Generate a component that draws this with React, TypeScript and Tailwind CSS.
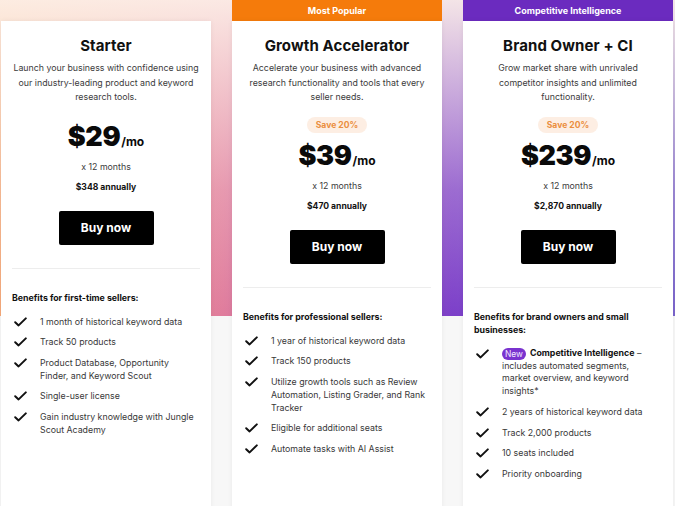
import React from "react";

type Plan = {
  header?: { text: string; bg: string };
  title: string;
  desc: string[];
  save?: boolean;
  price: string;
  annual: string;
  benefitsTitle: React.ReactNode;
  items: React.ReactNode[];
};

function Check() {
  return (
    <svg width="13" height="10" viewBox="0 0 13 10" fill="none">
      <path d="M1.2 5.2 L4.6 8.4 L11.8 1.4" stroke="#111" strokeWidth="2" strokeLinecap="round" strokeLinejoin="round" />
    </svg>
  );
}

const plans: Plan[] = [
  {
    title: "Starter",
    desc: ["Launch your business with confidence using", "our industry-leading product and keyword", "research tools."],
    price: "$29",
    annual: "$348 annually",
    benefitsTitle: "Benefits for first-time sellers:",
    items: [
      "1 month of historical keyword data",
      "Track 50 products",
      <>Product Database, Opportunity<br />Finder, and Keyword Scout</>,
      "Single-user license",
      <>Gain industry knowledge with Jungle<br />Scout Academy</>,
    ],
  },
  {
    header: { text: "Most Popular", bg: "bg-[#f57b0b]" },
    title: "Growth Accelerator",
    desc: ["Accelerate your business with advanced", "research functionality and tools that every", "seller needs."],
    save: true,
    price: "$39",
    annual: "$470 annually",
    benefitsTitle: "Benefits for professional sellers:",
    items: [
      "1 year of historical keyword data",
      "Track 150 products",
      <>Utilize growth tools such as Review<br />Automation, Listing Grader, and Rank<br />Tracker</>,
      "Eligible for additional seats",
      "Automate tasks with AI Assist",
    ],
  },
  {
    header: { text: "Competitive Intelligence", bg: "bg-[#6b2bbf]" },
    title: "Brand Owner + CI",
    desc: ["Grow market share with unrivaled", "competitor insights and unlimited", "functionality."],
    save: true,
    price: "$239",
    annual: "$2,870 annually",
    benefitsTitle: <>Benefits for brand owners and small<br />businesses:</>,
    items: [
      <span className="block leading-[12.6px]">
        <span className="inline-flex items-center h-[12px] px-[3px] rounded-full bg-[#7a33cf] text-[#f1e8ff] text-[8.4px] align-[-1px] mr-[4px]">New</span>
        <span className="font-bold text-[#111]">Competitive Intelligence</span> –<br />
        includes automated segments,<br />
        market overview, and keyword<br />
        insights*
      </span>,
      "2 years of historical keyword data",
      "Track 2,000 products",
      "10 seats included",
      "Priority onboarding",
    ],
  },
];

function Price({ value }: { value: string }) {
  return (
    <>
      <span className="text-[27px] leading-[30px] font-black tracking-[-0.4px]">{value}</span>
      <span className="text-[12px] font-bold ml-[1px]">/mo</span>
    </>
  );
}

function Card({ p }: { p: Plan }) {
  return (
    <div className="w-[210px] flex flex-col shrink-0">
      {p.header ? (
        <div className={`h-[21px] ${p.header.bg} text-white text-[9px] font-bold flex items-center justify-center`}>
          {p.header.text}
        </div>
      ) : (
        <div className="h-[21px]" />
      )}
      <div className="bg-white min-h-[500px] shadow-[0_0_5px_rgba(0,0,0,0.06)] px-[11px] pt-[17px] flex flex-col items-center text-center">
        <div className="text-[15px] leading-[16px] font-bold text-[#111] tracking-[0.1px]">{p.title}</div>
        <div className="mt-[7px] text-[8.8px] leading-[14.5px] text-[#3b3b3b]">
          {p.desc.map((d, i) => (
            <div key={i} className="whitespace-nowrap">{d}</div>
          ))}
        </div>
        {p.save ? (
          <>
            <div className="mt-[12.5px] h-[16px] px-[9px] rounded-full bg-[#fdeee3] text-[#eb8f3f] text-[8.6px] font-bold flex items-center">
              Save 20%
            </div>
            <div className="mt-[8px] h-[30px] flex items-baseline text-[#0a0a0a]">
              <Price value={p.price} />
            </div>
          </>
        ) : (
          <div className="mt-[17.5px] h-[30px] flex items-baseline text-[#0a0a0a]">
            <Price value={p.price} />
          </div>
        )}
        <div className="mt-[8px] text-[8.8px] leading-[14px] text-[#3b3b3b]">x 12 months</div>
        <div className="mt-[6px] text-[8.6px] leading-[14px] font-bold text-[#111]">{p.annual}</div>
        <div className="mt-[17px] w-[95px] h-[34px] bg-black rounded-[2px] flex items-center justify-center text-white text-[12px] font-bold">
          Buy now
        </div>
        <div className="mt-[23px] self-stretch h-px bg-[#ededed]" />
        <div className="mt-[21.5px] self-stretch text-left text-[8.8px] leading-[13px] font-bold text-[#111] whitespace-nowrap">
          {p.benefitsTitle}
        </div>
        <div className="mt-[11px] self-stretch flex flex-col gap-[7.5px] text-left">
          {p.items.map((it, i) => (
            <div key={i} className="flex">
              <div className="w-[28px] shrink-0 pl-[2px] pt-[2px]">
                <Check />
              </div>
              <div className="w-[160px] whitespace-nowrap text-[8.8px] leading-[13px] text-[#383838]">{it}</div>
            </div>
          ))}
        </div>
      </div>
    </div>
  );
}

export default function App() {
  return (
    <div
      className="h-[506px] w-[675px] overflow-hidden bg-[#f7f7f7] bg-no-repeat bg-size-[100%_316px] bg-[linear-gradient(to_bottom,rgba(253,241,233,0.93),rgba(253,241,233,0.25)_60%,rgba(253,241,233,0)),linear-gradient(to_right,#f6a979,#e07c9c_33%,#7c3fc9_67%,#7a64cc)]"
      style={{ fontFamily: "Inter, 'Liberation Sans', sans-serif" }}
    >
      <div className="flex items-start gap-[21px] pl-[1px]">
        {plans.map((p, i) => (
          <Card key={i} p={p} />
        ))}
      </div>
    </div>
  );
}
